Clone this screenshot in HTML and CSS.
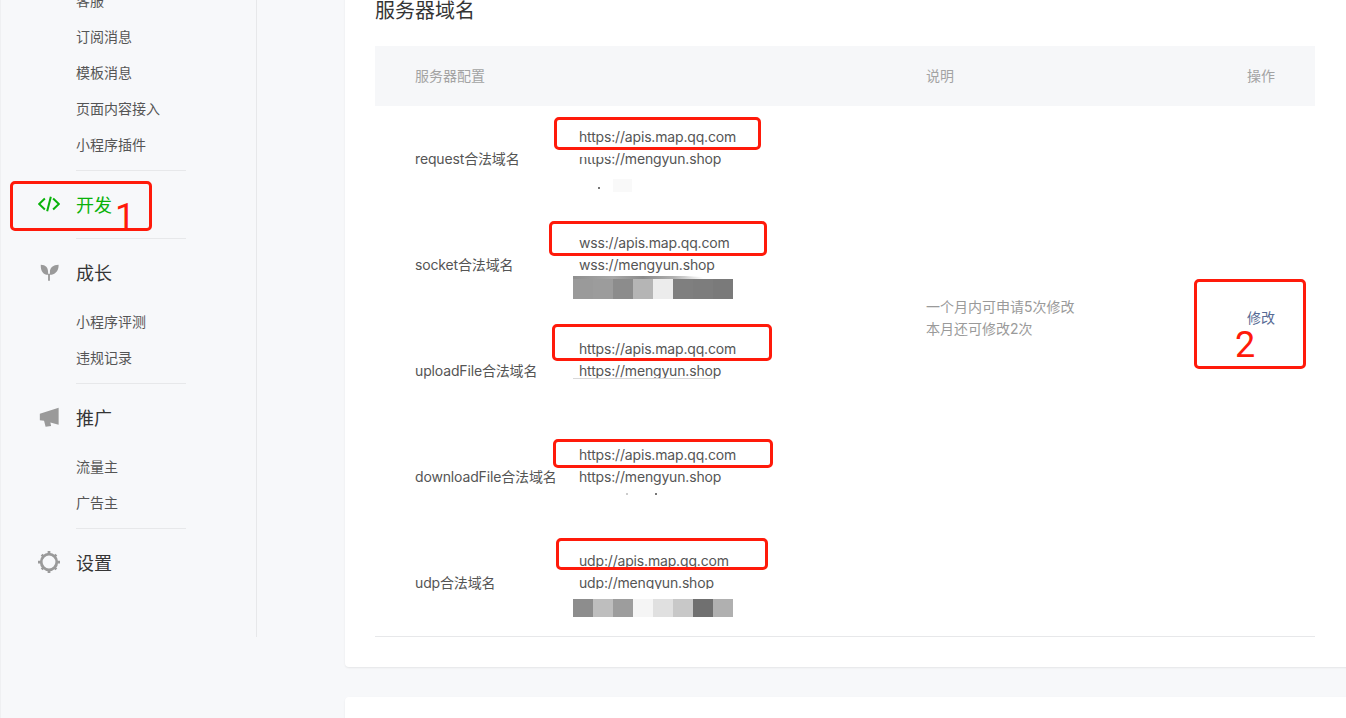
FILE: index.html
```html
<!DOCTYPE html>
<html lang="zh-CN">
<head>
<meta charset="utf-8">
<title>服务器域名</title>
<link rel="stylesheet" href="styles.css">
</head>
<body>
<div class="page">
  <aside class="sidebar">
    <section class="nav-section first">
      <ul class="nav-list">
        <li>客服</li>
        <li>订阅消息</li>
        <li>模板消息</li>
        <li>页面内容接入</li>
        <li>小程序插件</li>
      </ul>
    </section>
    <section class="nav-section">
      <div class="nav-head active">
        <svg class="nav-icon" viewBox="0 0 24 24"><path d="M7.500 6 1.200 12l6.300 6M16.500 6 22.800 12l-6.300 6M14 4 10 20" fill="none" stroke="#09b20a" stroke-width="2.200"/></svg>
        <span>开发</span>
      </div>
    </section>
    <section class="nav-section">
      <div class="nav-head">
        <svg class="nav-icon" viewBox="0 0 24 24"><path d="M3 4C8.500 4.300 11 7 11 12v3C6 15 2.800 11.500 3 4ZM22.500 4C16.500 4.300 13 7 13 12v3C18 15 22.700 11.500 22.500 4Z M11 14h2v7.500h-2z" fill="#9a9a9a"/></svg>
        <span>成长</span>
      </div>
      <ul class="nav-list">
        <li>小程序评测</li>
        <li>违规记录</li>
      </ul>
    </section>
    <section class="nav-section">
      <div class="nav-head">
        <svg class="nav-icon" viewBox="0 0 24 24"><path d="M2 8.500 22.500 2v18.500L13.500 18l.8 3.800-6 .7L6.600 16 2 15.500Z" fill="#9a9a9a"/></svg>
        <span>推广</span>
      </div>
      <ul class="nav-list">
        <li>流量主</li>
        <li>广告主</li>
      </ul>
    </section>
    <section class="nav-section last">
      <div class="nav-head">
        <svg class="nav-icon" viewBox="0 0 24 24"><circle cx="12" cy="12" r="8.500" fill="none" stroke="#9a9a9a" stroke-width="3"/><path d="M10.500 0h3v3h-3zM10.500 21h3v3h-3zM0 10.500h3v3H0zM21 10.500h3v3h-3zM3 5l2-2 2.500 2.500-2 2zM19 3l2 2-2.500 2.500-2-2zM21 19l-2 2-2.500-2.500 2-2zM5 21l-2-2 2.500-2.500 2 2z" fill="#9a9a9a"/></svg>
        <span>设置</span>
      </div>
    </section>
  </aside>

  <main class="content">
    <section class="card">
      <h2 class="card-title">服务器域名</h2>
      <table class="domain-table">
        <colgroup>
          <col class="col-label"><col class="col-domain"><col class="col-note"><col class="col-action">
        </colgroup>
        <thead>
          <tr><th class="cell-label">服务器配置</th><th></th><th>说明</th><th class="cell-action">操作</th></tr>
        </thead>
        <tbody>
          <tr>
            <td class="cell-label">request合法域名</td>
            <td>
              <div class="domains">
                <div>https://apis.map.qq.com</div>
                <div>https://mengyun.shop</div>
                <span class="mask mask-https"></span>
                <span class="speck speck-a"></span>
                <span class="smudge"></span>
              </div>
            </td>
            <td class="cell-note" rowspan="4">一个月内可申请5次修改<br>本月还可修改2次</td>
            <td class="cell-action" rowspan="4"><a class="link">修改</a></td>
          </tr>
          <tr>
            <td class="cell-label">socket合法域名</td>
            <td>
              <div class="domains">
                <div>wss://apis.map.qq.com</div>
                <div>wss://mengyun.shop</div>
                <div class="mosaic mosaic-socket"><i></i><i></i><i></i><i></i><i></i><i></i><i></i><i></i></div>
              </div>
            </td>
          </tr>
          <tr>
            <td class="cell-label">uploadFile合法域名</td>
            <td>
              <div class="domains">
                <div>https://apis.map.qq.com</div>
                <div>https://mengyun.shop</div>
                <span class="scratch"></span>
              </div>
            </td>
          </tr>
          <tr>
            <td class="cell-label">downloadFile合法域名</td>
            <td>
              <div class="domains">
                <div>https://apis.map.qq.com</div>
                <div>https://mengyun.shop</div>
                <span class="speck speck-b"></span>
                <span class="speck speck-c"></span>
              </div>
            </td>
          </tr>
          <tr>
            <td class="cell-label">udp合法域名</td>
            <td>
              <div class="domains">
                <div>udp://apis.map.qq.com</div>
                <div>udp://mengyun.shop</div>
                <div class="mosaic mosaic-udp"><i></i><i></i><i></i><i></i><i></i><i></i><i></i><i></i></div>
                <span class="mask mask-udp"></span>
              </div>
            </td>
            <td></td>
            <td></td>
          </tr>
        </tbody>
      </table>
    </section>
    <section class="card card-next"></section>
  </main>
</div>

<div class="mark mark-dev"></div>
<div class="mark mark-d1"></div>
<div class="mark mark-d2"></div>
<div class="mark mark-d3"></div>
<div class="mark mark-d4"></div>
<div class="mark mark-d5"></div>
<div class="mark mark-edit"></div>
<span class="mark-num num-1">1</span>
<span class="mark-num num-2">2</span>
</body>
</html>
```

FILE: styles.css
```css
* { box-sizing: border-box; }

html, body {
  height: 100%;
  margin: 0;
  overflow: hidden;
}

body {
  position: relative;
  background: #f7f8fa;
  border-left: 1px solid #eff0f2;
  color: #353535;
  font-family: Inter, "Noto Sans CJK SC", sans-serif;
  font-size: 14px;
}

.page {
  display: flex;
  align-items: flex-start;
  margin-top: -40px;
}

/* Sidebar */
.sidebar {
  flex: none;
  width: 256px;
  height: 677px;
  padding: 23px 70px 0 37px;
  border-right: 1px solid #e7e8ea;
}

.nav-section {
  padding: 6px 0 7px;
  border-bottom: 1px solid #e7e8ea;
  margin-left: 38px;
  width: 110px;
}

.nav-section.first {
  padding: 0 0 7px;
}

.nav-section.last {
  border-bottom: 0;
}

.nav-head {
  display: flex;
  align-items: center;
  height: 54px;
  margin-left: -38px;
  width: 148px;
  font-size: 18px;
  color: #353535;
}

.nav-head.active {
  color: #09b20a;
}

.nav-icon {
  flex: none;
  width: 22px;
  height: 22px;
  margin-right: 16px;
}

.nav-list {
  list-style: none;
  margin: 5px 0 0;
  padding: 0;
  color: #555;
  white-space: nowrap;
}

.first .nav-list {
  margin-top: 0;
}

.nav-list li {
  height: 36px;
  line-height: 36px;
}

/* Main */
.content {
  flex: none;
  width: 1020px;
  margin-left: 88px;
}

.card {
  height: 707px;
  padding: 37px 50px 0 30px;
  background: #fff;
  border-radius: 4px;
  box-shadow: 0 1px 2px rgba(0, 0, 0, .08);
}

.card-next {
  height: 60px;
  margin-top: 30px;
}

.card-title {
  margin: 0 0 21px;
  font-size: 20px;
  font-weight: 400;
  line-height: 28px;
  color: #353535;
}

.domain-table {
  width: 940px;
  table-layout: fixed;
  border-collapse: collapse;
  border-bottom: 1px solid #e7e8ea;
}

.col-label { width: 198px; }
.col-domain { width: 353px; }
.col-note { width: 249px; }
.col-action { width: 140px; }

.domain-table th {
  height: 60px;
  padding: 0 0 2px;
  background: #f6f7f9;
  font-size: 14px;
  font-weight: 400;
  text-align: left;
}

.domain-table td {
  height: 106px;
  padding: 0;
  vertical-align: middle;
}

.domain-table .cell-label {
  padding-left: 40px;
  color: #555;
}

.domain-table td.cell-label {
  padding-bottom: 2px;
  letter-spacing: -.15px;
}

.domain-table th,
.domain-table th.cell-label,
.domain-table th.cell-action {
  color: #a3a3a3;
}

.domain-table .cell-note {
  color: #9a9a9a;
  line-height: 22px;
}

.domain-table .cell-action {
  padding-right: 40px;
  text-align: right;
}

.link {
  display: inline-block;
  margin-bottom: 2px;
  color: #576b95;
}

.domains {
  position: relative;
  height: 66px;
  padding-left: 6px;
  color: #555;
  line-height: 22px;
  letter-spacing: -.17px;
}

.mosaic {
  position: relative;
  display: flex;
  width: 160px;
  margin-left: -6px;
}

.mosaic i { flex: 1; }

.mosaic-socket { height: 20px; margin-top: 3px; }
.mosaic-socket::before {
  content: "";
  position: absolute;
  top: -3px;
  left: 0;
  width: 160px;
  height: 3px;
  background: linear-gradient(90deg, #8f8f8f 0, #a8a8a8 40px, #8a8a8a 70px, #b0b0b0 100px, #fff 130px);
  clip-path: polygon(0 0, 70% 0, 100% 100%, 0 100%);
}
.mosaic-socket i:nth-child(1) { background: #9a9a9a; }
.mosaic-socket i:nth-child(2) { background: #9c9c9c; }
.mosaic-socket i:nth-child(3) { background: #8c8c8c; }
.mosaic-socket i:nth-child(4) { background: #b5b5b5; }
.mosaic-socket i:nth-child(5) { background: #ececec; }
.mosaic-socket i:nth-child(6) { background: #7f7f7f; }
.mosaic-socket i:nth-child(7) { background: #7d7d7d; }
.mosaic-socket i:nth-child(8) { background: #7a7a7a; }

.mosaic-udp { height: 18px; margin-top: 5px; }
.mosaic-udp i:nth-child(1) { background: #8d8d8d; }
.mosaic-udp i:nth-child(2) { background: #bebebe; }
.mosaic-udp i:nth-child(3) { background: #9d9d9d; }
.mosaic-udp i:nth-child(4) { background: #f5f5f5; }
.mosaic-udp i:nth-child(5) { background: #e0e0e0; }
.mosaic-udp i:nth-child(6) { background: #c8c8c8; }
.mosaic-udp i:nth-child(7) { background: #707070; }
.mosaic-udp i:nth-child(8) { background: #b0b0b0; }

/* Retouched traces left on the screenshot */
.mask {
  position: absolute;
  background: #fff;
}

.mask-https {
  top: 24px;
  left: 6px;
  width: 30px;
  height: 7px;
}

.mask-udp {
  top: 39px;
  left: 0;
  width: 146px;
  height: 4px;
}

.speck {
  position: absolute;
  width: 2px;
  height: 2px;
  background: #777;
}

.speck-a { top: 61px; left: 25px; }
.speck-b { top: 49px; left: 53px; background: #ccc; }
.speck-c { top: 49px; left: 82px; }

.smudge {
  position: absolute;
  top: 53px;
  left: 40px;
  width: 19px;
  height: 13px;
  background: #f9f9f9;
}

.scratch {
  position: absolute;
  top: 40px;
  left: 0;
  width: 140px;
  height: 1px;
  background: #d8d8d8;
}

/* Red annotations */
.mark {
  position: absolute;
  border: 3px solid #ff1a0a;
  border-radius: 5px;
}

.mark-dev { left: 9px; top: 181px; width: 142px; height: 50px; }
.mark-d1 { left: 553px; top: 117px; width: 207px; height: 33px; }
.mark-d2 { left: 548px; top: 221px; width: 218px; height: 35px; }
.mark-d3 { left: 551px; top: 324px; width: 220px; height: 37px; }
.mark-d4 { left: 552px; top: 439px; width: 220px; height: 29px; }
.mark-d5 { left: 555px; top: 538px; width: 212px; height: 32px; }
.mark-edit { left: 1193px; top: 279px; width: 112px; height: 90px; }

.mark-num {
  position: absolute;
  color: #ff1a0a;
  font-family: Roboto, sans-serif;
  font-size: 36px;
  line-height: 36px;
}

.num-1 { left: 114px; top: 199px; }
.num-2 { left: 1234px; top: 327px; }
```
